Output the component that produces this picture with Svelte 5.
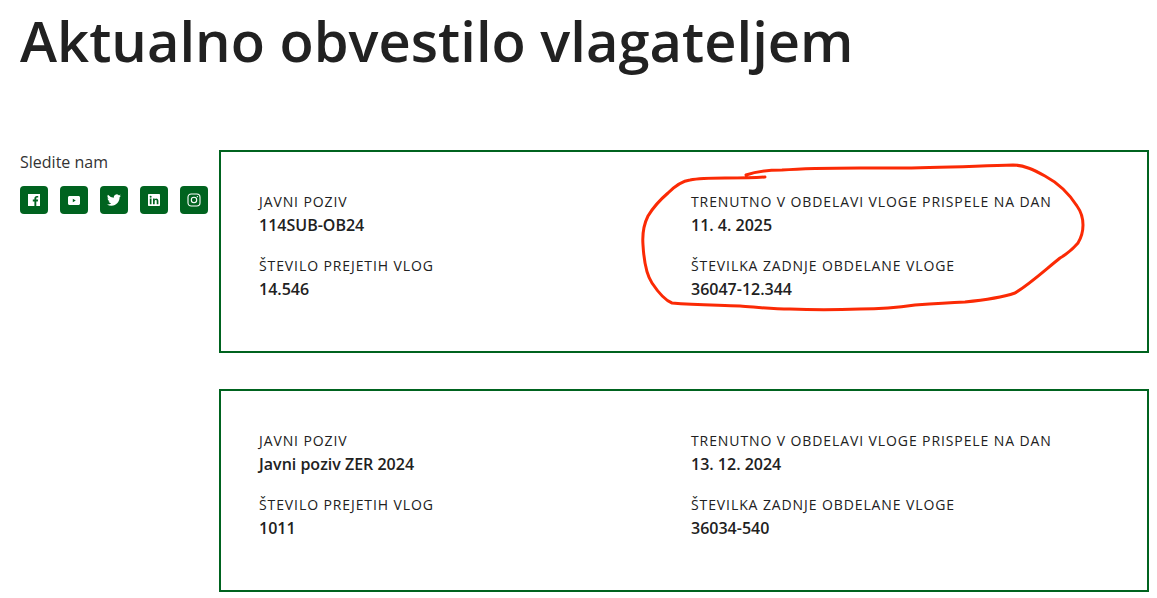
<script>
  const calls = [
    { poziv: '114SUB-OB24', stevilo: '14.546', dan: '11. 4. 2025', zadnja: '36047-12.344' },
    { poziv: 'Javni poziv ZER 2024', stevilo: '1011', dan: '13. 12. 2024', zadnja: '36034-540' }
  ];
</script>

<div class="page">
  <h1>Aktualno obvestilo vlagateljem</h1>

  <div class="layout">
    <aside>
      <p class="follow">Sledite nam</p>
      <div class="socials">
        <span class="social">
          <svg viewBox="0 0 12 12" width="12" height="12"><path fill="#fff" d="M0 0h12v12H8.300V7.400h1.500l.3-1.800H8.300V4.500c0-.5.2-.9.9-.9h1V2c-.3 0-.8-.1-1.300-.1-1.500 0-2.500.9-2.500 2.500v1.200H4.800v1.800h1.600V12H0z"/></svg>
        </span>
        <span class="social">
          <svg viewBox="0 0 12 9" width="12" height="9"><path fill="#fff" fill-rule="evenodd" d="M1.500 0h9C11.300 0 12 .7 12 1.500v6c0 .8-.7 1.500-1.500 1.500h-9C.7 9 0 8.300 0 7.500v-6C0 .7.700 0 1.500 0zM4.800 2.800v3.400L7.800 4.500z"/></svg>
        </span>
        <span class="social">
          <svg viewBox="0 0 24 24" width="14" height="14"><path fill="#fff" d="M23.950 4.570a10 10 0 0 1-2.820.77 4.960 4.960 0 0 0 2.160-2.720 9.900 9.900 0 0 1-3.120 1.190 4.920 4.920 0 0 0-8.380 4.480A13.960 13.960 0 0 1 1.640 3.160a4.920 4.920 0 0 0 1.520 6.570 4.900 4.900 0 0 1-2.230-.61v.06a4.920 4.920 0 0 0 3.950 4.830 5 5 0 0 1-2.210.08 4.940 4.940 0 0 0 4.600 3.420A9.870 9.870 0 0 1 0 19.540a14 14 0 0 0 7.560 2.210c9.050 0 14-7.500 14-13.980 0-.21 0-.42-.02-.63a9.940 9.940 0 0 0 2.410-2.570z"/></svg>
        </span>
        <span class="social">
          <svg viewBox="0 0 12 12" width="12" height="12"><path fill="#fff" fill-rule="evenodd" d="M1 0h10c.6 0 1 .4 1 1v10c0 .6-.4 1-1 1H1c-.6 0-1-.4-1-1V1c0-.6.4-1 1-1zM1.800 4.600v5.600h1.700V4.600zM2.650 1.800a1 1 0 1 0 0 2 1 1 0 0 0 0-2zM5 4.600v5.600h1.700V7.400c0-.8.300-1.400 1.100-1.400.7 0 .9.500.9 1.300v2.900h1.700V7c0-1.600-.8-2.500-2.100-2.500-.8 0-1.300.4-1.600.9V4.600z"/></svg>
        </span>
        <span class="social">
          <svg viewBox="0 0 14 14" width="14" height="14" fill="none" stroke="#fff" stroke-width="1.100"><rect x="1" y="1" width="12" height="12" rx="3.200"/><circle cx="7" cy="7" r="2.700"/><circle cx="10.400" cy="3.600" r=".7" fill="#fff" stroke="none"/></svg>
        </span>
      </div>
    </aside>

    <main>
      {#each calls as call}
        <section class="card">
          <div class="field">
            <span class="label">Javni poziv</span>
            <strong>{call.poziv}</strong>
          </div>
          <div class="field">
            <span class="label">Trenutno v obdelavi vloge prispele na dan</span>
            <strong>{call.dan}</strong>
          </div>
          <div class="field">
            <span class="label">Število prejetih vlog</span>
            <strong>{call.stevilo}</strong>
          </div>
          <div class="field">
            <span class="label">Številka zadnje obdelane vloge</span>
            <strong>{call.zadnja}</strong>
          </div>
        </section>
      {/each}
    </main>
  </div>

  <!-- hand drawn marker over the first card -->
  <svg class="marker" width="1157" height="598" viewBox="0 0 1157 598" fill="none">
    <path stroke="#fb2a05" stroke-width="3" stroke-linecap="round" stroke-linejoin="round"
      d="M746 175C757 171 770 170 782 170C820 167 860 168 897 168C935 168 975 166 1013 165C1024 165 1034 170 1045 176C1058 183 1068 192 1077 206C1082 213 1083 219 1083 225C1083 232 1081 238 1078 243C1072 250 1067 254 1060 258C1045 270 1030 284 1015 293C1000 298 985 300 965 302C945 303 930 304 915 305C895 308 880 309 860 309C835 310 812 310 790 309C770 309 755 307 740 306C715 305 695 305 672 303C664 300 658 292 652 283C646 274 644 262 643 245C642 232 644 224 648 216C654 206 661 199 668 193C675 186 682 181 690 180C700 178 712 178 725 178C740 178 752 178 765 177"/>
  </svg>
</div>

<style>
  :global(body) {
    background: #fff;
  }

  .page {
    position: relative;
    height: 598px;
    overflow: hidden;
    padding: 0 8px 0 20px;
    box-sizing: border-box;
    font-family: "Open Sans", sans-serif;
    color: #212121;
  }

  h1 {
    margin: 0;
    font-size: 56px;
    line-height: 80px;
    letter-spacing: 0.03px;
    font-weight: 600;
    height: 150px;
  }

  .layout {
    display: flex;
  }

  aside {
    width: 199px;
    flex-shrink: 0;
  }

  .follow {
    margin: 0;
    font-size: 16px;
    line-height: 24px;
    color: #333;
  }

  .socials {
    display: flex;
    gap: 12px;
    margin-top: 12px;
  }

  .social {
    width: 28px;
    height: 28px;
    border-radius: 4px;
    background: #00631f;
    display: flex;
    align-items: center;
    justify-content: center;
  }

  main {
    flex: 1;
    display: flex;
    flex-direction: column;
    gap: 36px;
  }

  .card {
    height: 203px;
    box-sizing: border-box;
    border: 2px solid #00631f;
    padding: 38px 38px 0;
    display: grid;
    grid-template-columns: 432px 1fr;
    grid-auto-rows: 64px;
  }

  .field {
    display: flex;
    flex-direction: column;
  }

  .label {
    font-size: 14px;
    line-height: 24px;
    letter-spacing: 0.9px;
    text-transform: uppercase;
    color: #212121;
  }

  strong {
    font-size: 16px;
    line-height: 24px;
    margin-top: -1px;
    font-weight: 600;
    color: #212121;
  }

  .marker {
    position: absolute;
    top: 0;
    left: 0;
    pointer-events: none;
  }
</style>
